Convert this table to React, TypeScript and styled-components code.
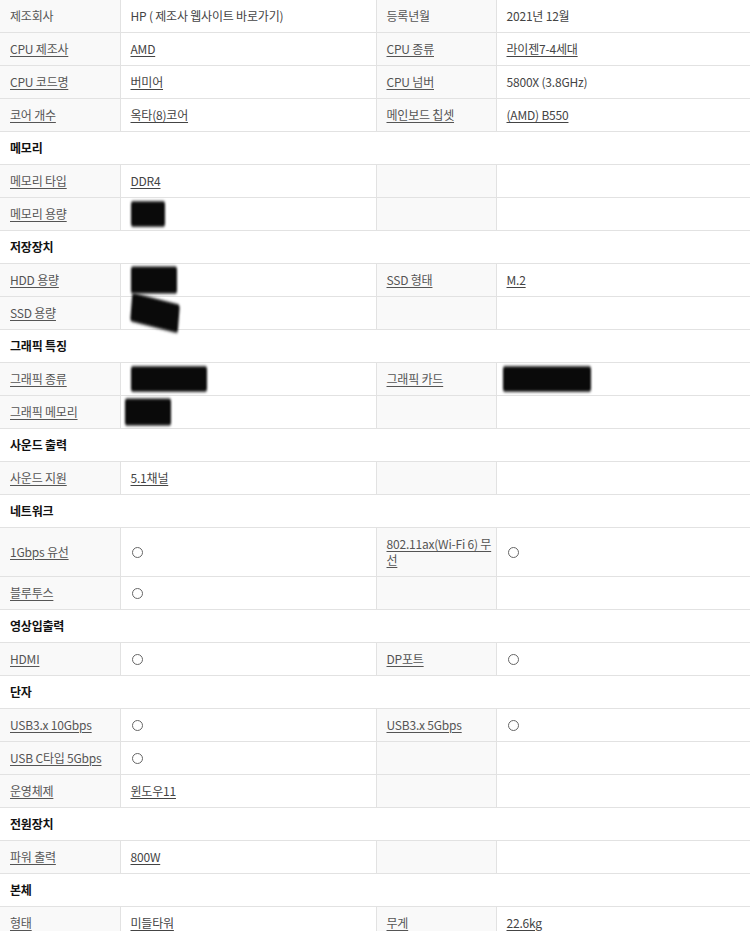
import React from "react";
import styled, { createGlobalStyle } from "styled-components";

const Global = createGlobalStyle`
  html, body { margin: 0; padding: 0; background: #fff; }
  body { font-family: "Noto Sans CJK KR", "Noto Sans", sans-serif; }
`;

const Table = styled.table`
  width: 750px;
  border-collapse: collapse;
  table-layout: fixed;
  font-size: 12px;
  line-height: 16px;
  color: #333;
  letter-spacing: -0.2px;
`;

const Row = styled.tr``;

const Cell = styled.td<{ $label?: boolean; $last?: boolean }>`
  padding: ${(p) => (p.$label ? "8px 4px 8px 10px" : "8px 10px")};
  height: 16px;
  vertical-align: middle;
  border-bottom: 1px solid #e2e2e2;
  border-right: ${(p) => (p.$last ? "none" : "1px solid #e2e2e2")};
  background: ${(p) => (p.$label ? "#f9f9f9" : "#fff")};
  color: ${(p) => (p.$label ? "#555" : "#444")};
  overflow: visible;
  overflow-wrap: break-word;
`;

const HeaderCell = styled.td`
  padding: 8px 10px;
  height: 16px;
  border-bottom: 1px solid #e2e2e2;
  font-weight: 700;
  color: #111;
  background: #fff;
`;

const Link = styled.span`
  text-decoration: underline;
  text-underline-offset: 2px;
`;

const Mark = styled.span`
  display: inline-block;
  width: 9px;
  height: 9px;
  border: 1px solid #666;
  border-radius: 50%;
  vertical-align: -1px;
  margin-left: 1px;
`;

const Redact = styled.span<{ $w: number; $s: number; $dx?: number; $rot?: number }>`
  display: inline-block;
  width: ${(p) => p.$w}px;
  height: 16px;
  margin-left: ${(p) => p.$dx ?? 0}px;
  background: #0a0a0a;
  vertical-align: top;
  filter: blur(1px);
  border-radius: 2px;
  transform: scaleY(${(p) => p.$s}) rotate(${(p) => p.$rot ?? 0}deg);
`;

type V = React.ReactNode;
type DataRow = { kind: "data"; a: V; b?: V; c?: V; d?: V };
type HeadRow = { kind: "head"; title: string };

const L = (t: string) => <Link>{t}</Link>;
const O = <Mark />;

const rows: (DataRow | HeadRow)[] = [
  { kind: "data", a: "제조회사", b: "HP ( 제조사 웹사이트 바로가기)", c: "등록년월", d: "2021년 12월" },
  { kind: "data", a: L("CPU 제조사"), b: L("AMD"), c: L("CPU 종류"), d: L("라이젠7-4세대") },
  { kind: "data", a: L("CPU 코드명"), b: L("버미어"), c: L("CPU 넘버"), d: "5800X (3.8GHz)" },
  { kind: "data", a: L("코어 개수"), b: L("옥타(8)코어"), c: L("메인보드 칩셋"), d: L("(AMD) B550") },
  { kind: "head", title: "메모리" },
  { kind: "data", a: L("메모리 타입"), b: L("DDR4") },
  { kind: "data", a: L("메모리 용량"), b: <Redact $w={34} $s={1.6} /> },
  { kind: "head", title: "저장장치" },
  { kind: "data", a: L("HDD 용량"), b: <Redact $w={46} $s={1.7} />, c: L("SSD 형태"), d: L("M.2") },
  { kind: "data", a: L("SSD 용량"), b: <Redact $w={48} $s={1.8} $rot={8} /> },
  { kind: "head", title: "그래픽 특징" },
  { kind: "data", a: L("그래픽 종류"), b: <Redact $w={76} $s={1.6} />, c: L("그래픽 카드"), d: <Redact $w={88} $s={1.6} $dx={-4} /> },
  { kind: "data", a: L("그래픽 메모리"), b: <Redact $w={46} $s={1.7} $dx={-6} /> },
  { kind: "head", title: "사운드 출력" },
  { kind: "data", a: L("사운드 지원"), b: L("5.1채널") },
  { kind: "head", title: "네트워크" },
  { kind: "data", a: L("1Gbps 유선"), b: O, c: L("802.11ax(Wi-Fi 6) 무선"), d: O },
  { kind: "data", a: L("블루투스"), b: O },
  { kind: "head", title: "영상입출력" },
  { kind: "data", a: L("HDMI"), b: O, c: L("DP포트"), d: O },
  { kind: "head", title: "단자" },
  { kind: "data", a: L("USB3.x 10Gbps"), b: O, c: L("USB3.x 5Gbps"), d: O },
  { kind: "data", a: L("USB C타입 5Gbps"), b: O },
  { kind: "data", a: L("운영체제"), b: L("윈도우11") },
  { kind: "head", title: "전원장치" },
  { kind: "data", a: L("파워 출력"), b: L("800W") },
  { kind: "head", title: "본체" },
  { kind: "data", a: L("형태"), b: L("미들타워"), c: L("무게"), d: L("22.6kg") },
];

export default function App() {
  return (
    <>
      <Global />
      <Table>
        <colgroup>
          <col style={{ width: 120 }} />
          <col style={{ width: 256 }} />
          <col style={{ width: 120 }} />
          <col style={{ width: 254 }} />
        </colgroup>
        <tbody>
          {rows.map((r, i) =>
            r.kind === "head" ? (
              <Row key={i}>
                <HeaderCell colSpan={4}>{r.title}</HeaderCell>
              </Row>
            ) : (
              <Row key={i}>
                <Cell $label>{r.a}</Cell>
                <Cell>{r.b}</Cell>
                <Cell $label>{r.c}</Cell>
                <Cell $last>{r.d}</Cell>
              </Row>
            )
          )}
        </tbody>
      </Table>
    </>
  );
}
